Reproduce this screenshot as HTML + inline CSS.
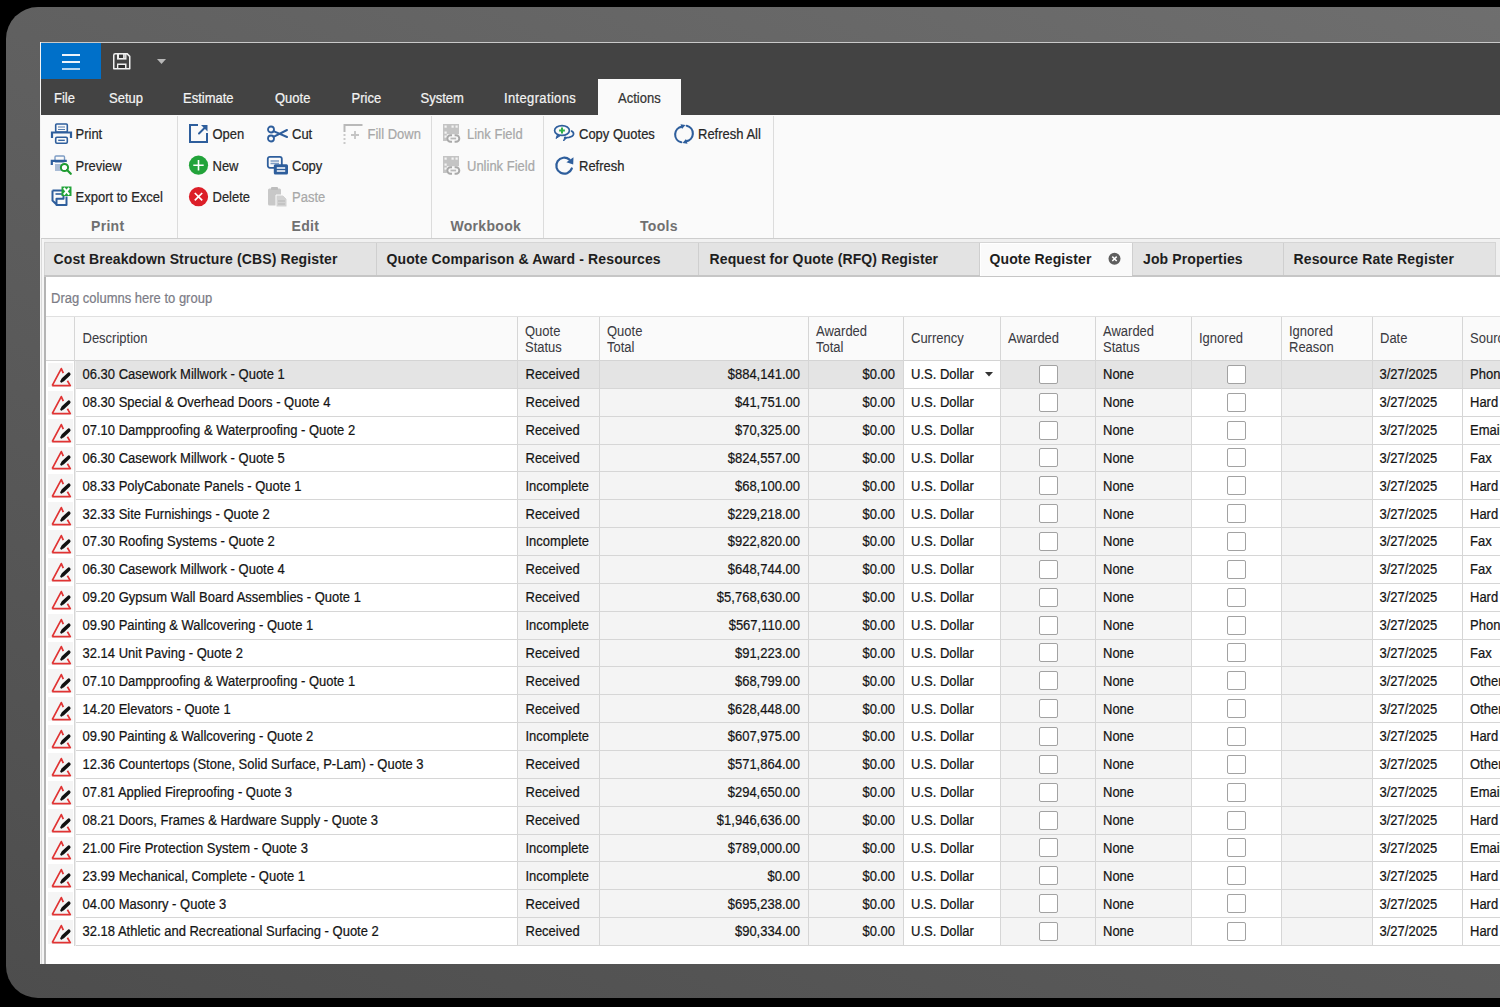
<!DOCTYPE html>
<html><head><meta charset="utf-8">
<style>
*{box-sizing:border-box}
html,body{margin:0;padding:0}
body{width:1500px;height:1007px;overflow:hidden;position:relative;background:#000;font-family:"Liberation Sans",sans-serif;font-size:13px;color:#141414}
.a{position:absolute}
.t{position:absolute;white-space:nowrap;line-height:16px;transform:scaleY(1.12);transform-origin:0 12.5px;-webkit-text-stroke-width:0.2px}
.b{transform:none}
svg{position:absolute;overflow:visible}
</style></head><body>

<div class="a" style="left:6px;top:7px;width:1560px;height:991px;border-radius:32px;background:linear-gradient(25.6deg,#4d4d4d,#6f6f6f)"></div>
<div class="a" style="left:40px;top:42px;width:1460px;height:922px;background:#f0f0f0"></div>
<div class="a" style="left:40px;top:42px;width:1460px;height:1px;background:#c9c9c9"></div>
<div class="a" style="left:40px;top:42px;width:1px;height:922px;background:#f4f4f4"></div>
<div class="a" style="left:41px;top:43px;width:1459px;height:72px;background:#434343"></div>
<div class="a" style="left:41px;top:43px;width:60px;height:36px;background:#0070c9"></div>
<div class="a" style="left:62px;top:54px;width:18px;height:2px;background:#eef4fb"></div>
<div class="a" style="left:62px;top:61px;width:18px;height:2px;background:#eef4fb"></div>
<div class="a" style="left:62px;top:68px;width:18px;height:2px;background:#b5d5f0"></div>
<svg style="left:112px;top:52px" width="20" height="20" viewBox="0 0 20 20"><path d="M1.75 3.2Q1.75 1.65 3.3 1.65H15L17.75 4.4V16.65H1.75Z" fill="none" stroke="#f0f0f0" stroke-width="1.5" stroke-linejoin="round"/><path d="M5 1.65H14.5V7.6H5Z" fill="#f0f0f0"/><rect x="7" y="2.6" width="4" height="3.4" fill="#383838"/><rect x="11.5" y="2.6" width="2" height="3.4" fill="#c8c8c8"/><path d="M5.75 16.65V12.25H13.75V16.65" fill="none" stroke="#f0f0f0" stroke-width="1.5"/><rect x="6.6" y="13" width="6.3" height="3" fill="#2e2e2e"/></svg>
<svg style="left:157px;top:59px" width="9" height="5" viewBox="0 0 9 5"><path d="M0 0h9l-4.5 5z" fill="#b8b8b8"/></svg>
<div class="t" style="left:54px;top:90.5px;color:#f3f3f3">File</div>
<div class="t" style="left:109px;top:90.5px;color:#f3f3f3">Setup</div>
<div class="t" style="left:183px;top:90.5px;color:#f3f3f3">Estimate</div>
<div class="t" style="left:275px;top:90.5px;color:#f3f3f3">Quote</div>
<div class="t" style="left:351.5px;top:90.5px;color:#f3f3f3">Price</div>
<div class="t" style="left:420.5px;top:90.5px;color:#f3f3f3">System</div>
<div class="t" style="left:504px;top:90.5px;color:#f3f3f3;letter-spacing:0.35px">Integrations</div>
<div class="a" style="left:598px;top:79px;width:83px;height:37px;background:#fafafa"></div>
<div class="t" style="left:618px;top:90.5px;color:#333">Actions</div>
<div class="a" style="left:41px;top:115px;width:1459px;height:123px;background:#fafafa"></div>
<div class="a" style="left:41px;top:238px;width:1459px;height:1px;background:#cdcdcd"></div>
<div class="a" style="left:177px;top:116px;width:1px;height:122px;background:#dcdcdc"></div>
<div class="a" style="left:431px;top:116px;width:1px;height:122px;background:#dcdcdc"></div>
<div class="a" style="left:543px;top:116px;width:1px;height:122px;background:#dcdcdc"></div>
<div class="a" style="left:773px;top:116px;width:1px;height:122px;background:#dcdcdc"></div>
<div class="t" style="left:75.5px;top:126.5px;color:#262626">Print</div>
<div class="t" style="left:75.5px;top:158.5px;color:#262626">Preview</div>
<div class="t" style="left:75.5px;top:189.5px;color:#262626">Export to Excel</div>
<div class="t" style="left:212.5px;top:126.5px;color:#262626">Open</div>
<div class="t" style="left:212.5px;top:158.5px;color:#262626">New</div>
<div class="t" style="left:212.5px;top:189.5px;color:#262626">Delete</div>
<div class="t" style="left:292px;top:126.5px;color:#262626">Cut</div>
<div class="t" style="left:292px;top:158.5px;color:#262626">Copy</div>
<div class="t" style="left:292px;top:189.5px;color:#a8a8a8">Paste</div>
<div class="t" style="left:367.5px;top:126.5px;color:#a8a8a8">Fill Down</div>
<div class="t" style="left:467px;top:126.5px;color:#a8a8a8">Link Field</div>
<div class="t" style="left:467px;top:158.5px;color:#a8a8a8">Unlink Field</div>
<div class="t" style="left:579px;top:126.5px;color:#262626">Copy Quotes</div>
<div class="t" style="left:698px;top:126.5px;color:#262626">Refresh All</div>
<div class="t" style="left:579px;top:158.5px;color:#262626">Refresh</div>
<div class="t" style="left:91px;top:218px;font-size:14px;font-weight:bold;color:#707070;transform:none;-webkit-text-stroke-width:0;letter-spacing:0.3px">Print</div>
<div class="t" style="left:291.5px;top:218px;font-size:14px;font-weight:bold;color:#707070;transform:none;-webkit-text-stroke-width:0;letter-spacing:0.3px">Edit</div>
<div class="t" style="left:450.5px;top:218px;font-size:14px;font-weight:bold;color:#707070;transform:none;-webkit-text-stroke-width:0;letter-spacing:0.3px">Workbook</div>
<div class="t" style="left:640px;top:218px;font-size:14px;font-weight:bold;color:#707070;transform:none;-webkit-text-stroke-width:0;letter-spacing:0.3px">Tools</div>
<svg style="left:51px;top:123px" width="21" height="21" viewBox="0 0 21 21">
<rect x="4.7" y="1" width="11.6" height="8" rx="1" fill="none" stroke="#2e5e9c" stroke-width="1.6"/>
<path d="M7 4h7M7 6.5h7" stroke="#2e5e9c" stroke-width="1.2" opacity=".8"/>
<path d="M1 15V9.5h19V15" fill="none" stroke="#2e5e9c" stroke-width="2.2"/>
<rect x="4.7" y="14.3" width="11.6" height="6" rx="1.2" fill="none" stroke="#2e5e9c" stroke-width="1.6"/>
<path d="M7.2 17.3h6.6" stroke="#2e5e9c" stroke-width="1.3"/>
</svg>
<svg style="left:51px;top:155px" width="22" height="22" viewBox="0 0 22 22">
<rect x="4" y="1" width="9.5" height="6" rx="1" fill="none" stroke="#7d9cc4" stroke-width="1.4"/>
<path d="M0.8 10V5.8h15" fill="none" stroke="#2e5e9c" stroke-width="2.2"/>
<rect x="4" y="9" width="8" height="7" fill="#a9bcd6"/>
<circle cx="13.5" cy="12.5" r="3.6" fill="#fff" stroke="#1e9b30" stroke-width="2"/>
<path d="M16 15l3.8 3.8" stroke="#1e9b30" stroke-width="2.2" stroke-linecap="round"/>
</svg>
<svg style="left:51px;top:186px" width="22" height="22" viewBox="0 0 22 22">
<path d="M1.5 4.5h11v8.2h-7v6.3h10V10.5M1.5 4.5v10l4 4" fill="none" stroke="#2e5e9c" stroke-width="2" stroke-linejoin="round"/>
<path d="M4.5 8h8" stroke="#2e5e9c" stroke-width="1.6"/>
<rect x="10.5" y="0.5" width="10" height="9.5" fill="#22a33a"/>
<path d="M12.8 2l5.4 6.6M18.2 2l-5.4 6.6" stroke="#fff" stroke-width="2"/>
</svg>
<svg style="left:188px;top:123px" width="21" height="21" viewBox="0 0 21 21">
<path d="M10 2H2v17h17v-9" fill="none" stroke="#2e5e9c" stroke-width="2"/>
<path d="M11 10.5l7-7" stroke="#2e5e9c" stroke-width="2" stroke-linecap="round"/>
<path d="M13 2h6.5v6.5z" fill="#2e5e9c"/>
</svg>
<svg style="left:188px;top:155px" width="21" height="21" viewBox="0 0 21 21">
<circle cx="10.5" cy="10.2" r="9.6" fill="#22a33a"/>
<path d="M10.5 5v10.4M5.3 10.2h10.4" stroke="#fff" stroke-width="1.6"/>
</svg>
<svg style="left:188px;top:186px" width="21" height="21" viewBox="0 0 21 21">
<circle cx="10.5" cy="10.7" r="9.6" fill="#dc1e28"/>
<path d="M6.8 7l7.4 7.4M14.2 7l-7.4 7.4" stroke="#fff" stroke-width="1.7"/>
</svg>
<svg style="left:266px;top:123px" width="22" height="21" viewBox="0 0 22 21">
<circle cx="5" cy="6.5" r="3" fill="none" stroke="#2e5e9c" stroke-width="1.8"/>
<circle cx="5" cy="15.5" r="3" fill="none" stroke="#2e5e9c" stroke-width="1.8"/>
<path d="M7.5 8.2L21 14M7.5 13.8L21 7" stroke="#2e5e9c" stroke-width="2" stroke-linecap="round"/>
</svg>
<svg style="left:266px;top:155px" width="23" height="21" viewBox="0 0 23 21">
<rect x="1.8" y="1.8" width="14" height="11" rx="2" fill="#fafafa" stroke="#2e5e9c" stroke-width="1.8"/>
<path d="M4.5 6h8.5M4.5 8.5h8.5" stroke="#7d9cc4" stroke-width="1.6"/>
<rect x="7.8" y="9.3" width="14.2" height="10.2" rx="1.5" fill="#2e5e9c"/>
<path d="M10.8 13h8.4M10.8 16h8.4" stroke="#fff" stroke-width="1.3"/>
</svg>
<svg style="left:266px;top:186px" width="23" height="22" viewBox="0 0 23 22">
<rect x="2" y="2.5" width="13" height="17" rx="1.5" fill="#c8c8c8"/>
<rect x="5" y="1" width="7" height="3" rx="1" fill="#bdbdbd"/>
<path d="M10 9h7l4 4v8H10z" fill="#d2d2d2" stroke="#fafafa" stroke-width="1"/>
<path d="M12 15h7M12 18h7" stroke="#b5b5b5" stroke-width="1.2"/>
</svg>
<svg style="left:343px;top:123px" width="21" height="22" viewBox="0 0 21 22">
<path d="M1.5 9V2h18" fill="none" stroke="#b9b9b9" stroke-width="2"/>
<path d="M1.5 11.2v1.6M1.5 15.2v1.6M1.5 19.2v1.6" stroke="#b9b9b9" stroke-width="2"/>
<path d="M12 8v8M8 12h8" stroke="#c4c4c4" stroke-width="1.8"/>
</svg>
<svg style="left:442px;top:123px" width="22" height="22" viewBox="0 0 22 22">
<rect x="1" y="1" width="16" height="17" fill="#c4c4c4"/>
<g fill="#f4f4f4"><rect x="2.5" y="2.5" width="2.2" height="2.2"/><rect x="9.5" y="2.5" width="2.2" height="2.2"/><rect x="13.5" y="2.5" width="2.2" height="2.2"/>
<rect x="2.5" y="8.5" width="2.2" height="2.2"/><rect x="2.5" y="12.5" width="2.2" height="2.2"/></g>
<path d="M4.8 11.2h13v9h-13z" fill="#f8f8f8"/>
<path d="M10 12.2H8.6a3.3 3.3 0 0 0 0 6.6H10M12.6 12.2H14a3.3 3.3 0 0 1 0 6.6H12.6" fill="none" stroke="#a9a9a9" stroke-width="2"/>
<path d="M8.5 15.5h5.6" stroke="#b8b8b8" stroke-width="1.8"/>
</svg>
<svg style="left:442px;top:155px" width="22" height="22" viewBox="0 0 22 22">
<rect x="1" y="1" width="16" height="17" fill="#c4c4c4"/>
<g fill="#f4f4f4"><rect x="2.5" y="2.5" width="2.2" height="2.2"/><rect x="9.5" y="2.5" width="2.2" height="2.2"/><rect x="13.5" y="2.5" width="2.2" height="2.2"/>
<rect x="2.5" y="8.5" width="2.2" height="2.2"/><rect x="2.5" y="12.5" width="2.2" height="2.2"/></g>
<path d="M4.8 11.2h13v9h-13z" fill="#f8f8f8"/>
<path d="M10 12.2H8.6a3.3 3.3 0 0 0 0 6.6H10M12.6 12.2H14a3.3 3.3 0 0 1 0 6.6H12.6" fill="none" stroke="#a9a9a9" stroke-width="2"/>
<path d="M8.5 15.5h5.6" stroke="#b8b8b8" stroke-width="1.8"/>
</svg>
<svg style="left:553px;top:123px" width="24" height="22" viewBox="0 0 24 22">
<ellipse cx="9" cy="7.5" rx="7.4" ry="4.9" fill="none" stroke="#2e5e9c" stroke-width="1.7"/>
<path d="M4.5 11.5l-1.5 4 4.5-3" fill="#2e5e9c" stroke="#2e5e9c" stroke-width="1"/>
<path d="M18 7.8c3.5 1.6 4 5.3-2 6.6l-5 .6" fill="none" stroke="#2e5e9c" stroke-width="1.7"/>
<path d="M12 13.5l-1.5 4.5 3.5-3.5" fill="#2e5e9c" stroke="#2e5e9c" stroke-width="1"/>
<path d="M9 4.6v5.8M6.1 7.5h5.8" stroke="#2fb04a" stroke-width="2"/>
</svg>
<svg style="left:673px;top:123px" width="22" height="22" viewBox="0 0 22 22">
<path d="M8.3 19.3A8 8 0 0 1 9 3.6" fill="none" stroke="#2e5e9c" stroke-width="2.1" stroke-linecap="round"/>
<path d="M7.5 1.2l5 0.8-3.5 4z" fill="#2e5e9c"/>
<path d="M13.7 2.7A8 8 0 0 1 13 18.4" fill="none" stroke="#2e5e9c" stroke-width="2.1" stroke-linecap="round"/>
<path d="M14.5 20.8l-5-0.8 3.5-4z" fill="#2e5e9c"/>
</svg>
<svg style="left:554px;top:155px" width="22" height="22" viewBox="0 0 22 22">
<path d="M17.8 13.5A8 8 0 1 1 15.5 4.6" fill="none" stroke="#2e5e9c" stroke-width="2.2" stroke-linecap="round"/>
<path d="M19.5 2.2l-0.3 7.3-6.8-2.2z" fill="#2e5e9c"/>
</svg>
<div class="a" style="left:41px;top:239px;width:1459px;height:725px;background:#f0f0f0"></div>
<div class="a" style="left:41px;top:239px;width:1px;height:725px;background:#dadada"></div>
<div class="a" style="left:42px;top:239px;width:2px;height:725px;background:#f6f6f6"></div>
<div class="a" style="left:44px;top:242px;width:1452px;height:34px;background:#e3e3e3;border:1px solid #d5d5d5;border-bottom:none"></div>
<div class="a" style="left:44px;top:275px;width:1456px;height:2px;background:#c6c6c6"></div>
<div class="a" style="left:376px;top:243px;width:1px;height:32px;background:#cfcfcf"></div>
<div class="a" style="left:698px;top:243px;width:1px;height:32px;background:#cfcfcf"></div>
<div class="a" style="left:979px;top:243px;width:1px;height:32px;background:#cfcfcf"></div>
<div class="a" style="left:1132px;top:243px;width:1px;height:32px;background:#cfcfcf"></div>
<div class="a" style="left:1283px;top:243px;width:1px;height:32px;background:#cfcfcf"></div>
<div class="a" style="left:980px;top:243px;width:152px;height:33px;background:#fafafa;border-left:1px solid #fff;border-top:1px solid #fff"></div>
<div class="t" style="left:53.5px;top:251px;font-size:14px;font-weight:bold;color:#1e1e1e;transform:none;-webkit-text-stroke-width:0;letter-spacing:0.12px">Cost Breakdown Structure (CBS) Register</div>
<div class="t" style="left:386.5px;top:251px;font-size:14px;font-weight:bold;color:#1e1e1e;transform:none;-webkit-text-stroke-width:0;letter-spacing:0.12px">Quote Comparison &amp; Award - Resources</div>
<div class="t" style="left:709.5px;top:251px;font-size:14px;font-weight:bold;color:#1e1e1e;transform:none;-webkit-text-stroke-width:0;letter-spacing:0.12px">Request for Quote (RFQ) Register</div>
<div class="t" style="left:989.5px;top:251px;font-size:14px;font-weight:bold;color:#1e1e1e;transform:none;-webkit-text-stroke-width:0;letter-spacing:0.12px">Quote Register</div>
<div class="t" style="left:1143px;top:251px;font-size:14px;font-weight:bold;color:#1e1e1e;transform:none;-webkit-text-stroke-width:0;letter-spacing:0.12px">Job Properties</div>
<div class="t" style="left:1293.5px;top:251px;font-size:14px;font-weight:bold;color:#1e1e1e;transform:none;-webkit-text-stroke-width:0;letter-spacing:0.12px">Resource Rate Register</div>
<svg style="left:1108px;top:252px" width="14" height="14" viewBox="0 0 14 14"><circle cx="6.5" cy="6.8" r="6" fill="#5e5e5e"/><path d="M4.3 4.6l4.4 4.4M8.7 4.6l-4.4 4.4" stroke="#fff" stroke-width="1.5"/></svg>
<div class="a" style="left:44px;top:277px;width:1456px;height:687px;background:#fff"></div>
<div class="a" style="left:44px;top:277px;width:2px;height:687px;background:#b4b4b4"></div>
<div class="t" style="left:51px;top:290.5px;color:#7c7c86">Drag columns here to group</div>
<div class="a" style="left:46px;top:316px;width:1454px;height:44px;background:#fafafa;border-top:1px solid #e0e0e0"></div>
<div class="a" style="left:46px;top:360px;width:1454px;height:1px;background:#d4d4d4"></div>
<div class="t" style="left:82.5px;top:330.5px;color:#3a3a42;-webkit-text-stroke-width:0.05px">Description</div>
<div class="t" style="left:525px;top:325px;color:#3a3a42;-webkit-text-stroke-width:0.05px;line-height:14px;transform-origin:0 11.5px">Quote<br>Status</div>
<div class="t" style="left:607px;top:325px;color:#3a3a42;-webkit-text-stroke-width:0.05px;line-height:14px;transform-origin:0 11.5px">Quote<br>Total</div>
<div class="t" style="left:816px;top:325px;color:#3a3a42;-webkit-text-stroke-width:0.05px;line-height:14px;transform-origin:0 11.5px">Awarded<br>Total</div>
<div class="t" style="left:911px;top:330.5px;color:#3a3a42;-webkit-text-stroke-width:0.05px">Currency</div>
<div class="t" style="left:1008px;top:330.5px;color:#3a3a42;-webkit-text-stroke-width:0.05px">Awarded</div>
<div class="t" style="left:1103px;top:325px;color:#3a3a42;-webkit-text-stroke-width:0.05px;line-height:14px;transform-origin:0 11.5px">Awarded<br>Status</div>
<div class="t" style="left:1199px;top:330.5px;color:#3a3a42;-webkit-text-stroke-width:0.05px">Ignored</div>
<div class="t" style="left:1289px;top:325px;color:#3a3a42;-webkit-text-stroke-width:0.05px;line-height:14px;transform-origin:0 11.5px">Ignored<br>Reason</div>
<div class="t" style="left:1380px;top:330.5px;color:#3a3a42;-webkit-text-stroke-width:0.05px">Date</div>
<div class="t" style="left:1470px;top:330.5px;color:#3a3a42;-webkit-text-stroke-width:0.05px">Source</div>
<div class="a" style="left:48px;top:363px;width:25px;height:24px;background:#f5f5f5"></div>
<div class="a" style="left:48px;top:391px;width:25px;height:24px;background:#f5f5f5"></div>
<div class="a" style="left:48px;top:419px;width:25px;height:24px;background:#f5f5f5"></div>
<div class="a" style="left:48px;top:447px;width:25px;height:23px;background:#f5f5f5"></div>
<div class="a" style="left:48px;top:474px;width:25px;height:24px;background:#f5f5f5"></div>
<div class="a" style="left:48px;top:502px;width:25px;height:24px;background:#f5f5f5"></div>
<div class="a" style="left:48px;top:530px;width:25px;height:24px;background:#f5f5f5"></div>
<div class="a" style="left:48px;top:558px;width:25px;height:24px;background:#f5f5f5"></div>
<div class="a" style="left:48px;top:586px;width:25px;height:24px;background:#f5f5f5"></div>
<div class="a" style="left:48px;top:614px;width:25px;height:24px;background:#f5f5f5"></div>
<div class="a" style="left:48px;top:642px;width:25px;height:23px;background:#f5f5f5"></div>
<div class="a" style="left:48px;top:669px;width:25px;height:24px;background:#f5f5f5"></div>
<div class="a" style="left:48px;top:697px;width:25px;height:24px;background:#f5f5f5"></div>
<div class="a" style="left:48px;top:725px;width:25px;height:24px;background:#f5f5f5"></div>
<div class="a" style="left:48px;top:753px;width:25px;height:24px;background:#f5f5f5"></div>
<div class="a" style="left:48px;top:781px;width:25px;height:24px;background:#f5f5f5"></div>
<div class="a" style="left:48px;top:809px;width:25px;height:24px;background:#f5f5f5"></div>
<div class="a" style="left:48px;top:837px;width:25px;height:23px;background:#f5f5f5"></div>
<div class="a" style="left:48px;top:864px;width:25px;height:24px;background:#f5f5f5"></div>
<div class="a" style="left:48px;top:892px;width:25px;height:24px;background:#f5f5f5"></div>
<div class="a" style="left:48px;top:920px;width:25px;height:24px;background:#f5f5f5"></div>
<div class="a" style="left:518px;top:361px;width:81px;height:584px;background:#f4f4f4"></div>
<div class="a" style="left:600px;top:361px;width:208px;height:584px;background:#f4f4f4"></div>
<div class="a" style="left:809px;top:361px;width:94px;height:584px;background:#f4f4f4"></div>
<div class="a" style="left:1001px;top:361px;width:94px;height:584px;background:#f4f4f4"></div>
<div class="a" style="left:1096px;top:361px;width:95px;height:584px;background:#f4f4f4"></div>
<div class="a" style="left:1282px;top:361px;width:90px;height:584px;background:#f4f4f4"></div>
<div class="a" style="left:75px;top:361px;width:1425px;height:27px;background:#e4e4e4"></div>
<div class="a" style="left:904px;top:361px;width:96px;height:27px;background:#fff"></div>
<div class="a" style="left:75px;top:388px;width:1425px;height:1px;background:#d6d6d6"></div>
<div class="a" style="left:75px;top:416px;width:1425px;height:1px;background:#d6d6d6"></div>
<div class="a" style="left:75px;top:444px;width:1425px;height:1px;background:#d6d6d6"></div>
<div class="a" style="left:75px;top:471px;width:1425px;height:1px;background:#d6d6d6"></div>
<div class="a" style="left:75px;top:499px;width:1425px;height:1px;background:#d6d6d6"></div>
<div class="a" style="left:75px;top:527px;width:1425px;height:1px;background:#d6d6d6"></div>
<div class="a" style="left:75px;top:555px;width:1425px;height:1px;background:#d6d6d6"></div>
<div class="a" style="left:75px;top:583px;width:1425px;height:1px;background:#d6d6d6"></div>
<div class="a" style="left:75px;top:611px;width:1425px;height:1px;background:#d6d6d6"></div>
<div class="a" style="left:75px;top:639px;width:1425px;height:1px;background:#d6d6d6"></div>
<div class="a" style="left:75px;top:666px;width:1425px;height:1px;background:#d6d6d6"></div>
<div class="a" style="left:75px;top:694px;width:1425px;height:1px;background:#d6d6d6"></div>
<div class="a" style="left:75px;top:722px;width:1425px;height:1px;background:#d6d6d6"></div>
<div class="a" style="left:75px;top:750px;width:1425px;height:1px;background:#d6d6d6"></div>
<div class="a" style="left:75px;top:778px;width:1425px;height:1px;background:#d6d6d6"></div>
<div class="a" style="left:75px;top:806px;width:1425px;height:1px;background:#d6d6d6"></div>
<div class="a" style="left:75px;top:834px;width:1425px;height:1px;background:#d6d6d6"></div>
<div class="a" style="left:75px;top:861px;width:1425px;height:1px;background:#d6d6d6"></div>
<div class="a" style="left:75px;top:889px;width:1425px;height:1px;background:#d6d6d6"></div>
<div class="a" style="left:75px;top:917px;width:1425px;height:1px;background:#d6d6d6"></div>
<div class="a" style="left:75px;top:945px;width:1425px;height:1px;background:#d6d6d6"></div>
<div class="a" style="left:74px;top:317px;width:1px;height:629px;background:#d6d6d6"></div>
<div class="a" style="left:75px;top:361px;width:1px;height:585px;background:#ececec"></div>
<div class="a" style="left:517px;top:317px;width:1px;height:629px;background:#d6d6d6"></div>
<div class="a" style="left:599px;top:317px;width:1px;height:629px;background:#d6d6d6"></div>
<div class="a" style="left:808px;top:317px;width:1px;height:629px;background:#d6d6d6"></div>
<div class="a" style="left:903px;top:317px;width:1px;height:629px;background:#d6d6d6"></div>
<div class="a" style="left:1000px;top:317px;width:1px;height:629px;background:#d6d6d6"></div>
<div class="a" style="left:1095px;top:317px;width:1px;height:629px;background:#d6d6d6"></div>
<div class="a" style="left:1191px;top:317px;width:1px;height:629px;background:#d6d6d6"></div>
<div class="a" style="left:1281px;top:317px;width:1px;height:629px;background:#d6d6d6"></div>
<div class="a" style="left:1372px;top:317px;width:1px;height:629px;background:#d6d6d6"></div>
<div class="a" style="left:1462px;top:317px;width:1px;height:629px;background:#d6d6d6"></div>
<svg style="left:51px;top:367px" width="21" height="20" viewBox="0 0 21 20"><path d="M1.2 18.6L10.3 1.6L12.3 6.2M16.4 13.7L19.3 18.6H1.2" fill="none" stroke="#e03333" stroke-width="1.7" stroke-linejoin="round"/><path d="M12 12.6L17.8 7.2" stroke="#111" stroke-width="3.5" stroke-linecap="round"/><path d="M10.4 14.4L12.6 12" stroke="#111" stroke-width="2.4" stroke-linecap="round"/></svg>
<div class="t" style="left:82.5px;top:367.26px">06.30 Casework Millwork - Quote 1</div>
<div class="t" style="left:525.5px;top:367.26px">Received</div>
<div class="t" style="left:600px;width:200px;text-align:right;top:367.26px">$884,141.00</div>
<div class="t" style="left:809px;width:86px;text-align:right;top:367.26px">$0.00</div>
<div class="t" style="left:911px;top:367.26px">U.S. Dollar</div>
<div class="a" style="left:1039px;top:365px;width:19px;height:19px;border:1px solid #a2a2a2;border-radius:2px;background:#fff"></div>
<div class="t" style="left:1103px;top:367.26px">None</div>
<div class="a" style="left:1227px;top:365px;width:19px;height:19px;border:1px solid #a2a2a2;border-radius:2px;background:#fff"></div>
<div class="t" style="left:1379.5px;top:367.26px">3/27/2025</div>
<div class="t" style="left:1470px;top:367.26px">Phone</div>
<svg style="left:51px;top:395px" width="21" height="20" viewBox="0 0 21 20"><path d="M1.2 18.6L10.3 1.6L12.3 6.2M16.4 13.7L19.3 18.6H1.2" fill="none" stroke="#e03333" stroke-width="1.7" stroke-linejoin="round"/><path d="M12 12.6L17.8 7.2" stroke="#111" stroke-width="3.5" stroke-linecap="round"/><path d="M10.4 14.4L12.6 12" stroke="#111" stroke-width="2.4" stroke-linecap="round"/></svg>
<div class="t" style="left:82.5px;top:395.11px">08.30 Special &amp; Overhead Doors - Quote 4</div>
<div class="t" style="left:525.5px;top:395.11px">Received</div>
<div class="t" style="left:600px;width:200px;text-align:right;top:395.11px">$41,751.00</div>
<div class="t" style="left:809px;width:86px;text-align:right;top:395.11px">$0.00</div>
<div class="t" style="left:911px;top:395.11px">U.S. Dollar</div>
<div class="a" style="left:1039px;top:393px;width:19px;height:19px;border:1px solid #a2a2a2;border-radius:2px;background:#fff"></div>
<div class="t" style="left:1103px;top:395.11px">None</div>
<div class="a" style="left:1227px;top:393px;width:19px;height:19px;border:1px solid #a2a2a2;border-radius:2px;background:#fff"></div>
<div class="t" style="left:1379.5px;top:395.11px">3/27/2025</div>
<div class="t" style="left:1470px;top:395.11px">Hard</div>
<svg style="left:51px;top:423px" width="21" height="20" viewBox="0 0 21 20"><path d="M1.2 18.6L10.3 1.6L12.3 6.2M16.4 13.7L19.3 18.6H1.2" fill="none" stroke="#e03333" stroke-width="1.7" stroke-linejoin="round"/><path d="M12 12.6L17.8 7.2" stroke="#111" stroke-width="3.5" stroke-linecap="round"/><path d="M10.4 14.4L12.6 12" stroke="#111" stroke-width="2.4" stroke-linecap="round"/></svg>
<div class="t" style="left:82.5px;top:422.97px">07.10 Dampproofing &amp; Waterproofing - Quote 2</div>
<div class="t" style="left:525.5px;top:422.97px">Received</div>
<div class="t" style="left:600px;width:200px;text-align:right;top:422.97px">$70,325.00</div>
<div class="t" style="left:809px;width:86px;text-align:right;top:422.97px">$0.00</div>
<div class="t" style="left:911px;top:422.97px">U.S. Dollar</div>
<div class="a" style="left:1039px;top:421px;width:19px;height:19px;border:1px solid #a2a2a2;border-radius:2px;background:#fff"></div>
<div class="t" style="left:1103px;top:422.97px">None</div>
<div class="a" style="left:1227px;top:421px;width:19px;height:19px;border:1px solid #a2a2a2;border-radius:2px;background:#fff"></div>
<div class="t" style="left:1379.5px;top:422.97px">3/27/2025</div>
<div class="t" style="left:1470px;top:422.97px">Email</div>
<svg style="left:51px;top:450px" width="21" height="20" viewBox="0 0 21 20"><path d="M1.2 18.6L10.3 1.6L12.3 6.2M16.4 13.7L19.3 18.6H1.2" fill="none" stroke="#e03333" stroke-width="1.7" stroke-linejoin="round"/><path d="M12 12.6L17.8 7.2" stroke="#111" stroke-width="3.5" stroke-linecap="round"/><path d="M10.4 14.4L12.6 12" stroke="#111" stroke-width="2.4" stroke-linecap="round"/></svg>
<div class="t" style="left:82.5px;top:450.83px">06.30 Casework Millwork - Quote 5</div>
<div class="t" style="left:525.5px;top:450.83px">Received</div>
<div class="t" style="left:600px;width:200px;text-align:right;top:450.83px">$824,557.00</div>
<div class="t" style="left:809px;width:86px;text-align:right;top:450.83px">$0.00</div>
<div class="t" style="left:911px;top:450.83px">U.S. Dollar</div>
<div class="a" style="left:1039px;top:448px;width:19px;height:19px;border:1px solid #a2a2a2;border-radius:2px;background:#fff"></div>
<div class="t" style="left:1103px;top:450.83px">None</div>
<div class="a" style="left:1227px;top:448px;width:19px;height:19px;border:1px solid #a2a2a2;border-radius:2px;background:#fff"></div>
<div class="t" style="left:1379.5px;top:450.83px">3/27/2025</div>
<div class="t" style="left:1470px;top:450.83px">Fax</div>
<svg style="left:51px;top:478px" width="21" height="20" viewBox="0 0 21 20"><path d="M1.2 18.6L10.3 1.6L12.3 6.2M16.4 13.7L19.3 18.6H1.2" fill="none" stroke="#e03333" stroke-width="1.7" stroke-linejoin="round"/><path d="M12 12.6L17.8 7.2" stroke="#111" stroke-width="3.5" stroke-linecap="round"/><path d="M10.4 14.4L12.6 12" stroke="#111" stroke-width="2.4" stroke-linecap="round"/></svg>
<div class="t" style="left:82.5px;top:478.69px">08.33 PolyCabonate Panels - Quote 1</div>
<div class="t" style="left:525.5px;top:478.69px">Incomplete</div>
<div class="t" style="left:600px;width:200px;text-align:right;top:478.69px">$68,100.00</div>
<div class="t" style="left:809px;width:86px;text-align:right;top:478.69px">$0.00</div>
<div class="t" style="left:911px;top:478.69px">U.S. Dollar</div>
<div class="a" style="left:1039px;top:476px;width:19px;height:19px;border:1px solid #a2a2a2;border-radius:2px;background:#fff"></div>
<div class="t" style="left:1103px;top:478.69px">None</div>
<div class="a" style="left:1227px;top:476px;width:19px;height:19px;border:1px solid #a2a2a2;border-radius:2px;background:#fff"></div>
<div class="t" style="left:1379.5px;top:478.69px">3/27/2025</div>
<div class="t" style="left:1470px;top:478.69px">Hard</div>
<svg style="left:51px;top:506px" width="21" height="20" viewBox="0 0 21 20"><path d="M1.2 18.6L10.3 1.6L12.3 6.2M16.4 13.7L19.3 18.6H1.2" fill="none" stroke="#e03333" stroke-width="1.7" stroke-linejoin="round"/><path d="M12 12.6L17.8 7.2" stroke="#111" stroke-width="3.5" stroke-linecap="round"/><path d="M10.4 14.4L12.6 12" stroke="#111" stroke-width="2.4" stroke-linecap="round"/></svg>
<div class="t" style="left:82.5px;top:506.54px">32.33 Site Furnishings - Quote 2</div>
<div class="t" style="left:525.5px;top:506.54px">Received</div>
<div class="t" style="left:600px;width:200px;text-align:right;top:506.54px">$229,218.00</div>
<div class="t" style="left:809px;width:86px;text-align:right;top:506.54px">$0.00</div>
<div class="t" style="left:911px;top:506.54px">U.S. Dollar</div>
<div class="a" style="left:1039px;top:504px;width:19px;height:19px;border:1px solid #a2a2a2;border-radius:2px;background:#fff"></div>
<div class="t" style="left:1103px;top:506.54px">None</div>
<div class="a" style="left:1227px;top:504px;width:19px;height:19px;border:1px solid #a2a2a2;border-radius:2px;background:#fff"></div>
<div class="t" style="left:1379.5px;top:506.54px">3/27/2025</div>
<div class="t" style="left:1470px;top:506.54px">Hard</div>
<svg style="left:51px;top:534px" width="21" height="20" viewBox="0 0 21 20"><path d="M1.2 18.6L10.3 1.6L12.3 6.2M16.4 13.7L19.3 18.6H1.2" fill="none" stroke="#e03333" stroke-width="1.7" stroke-linejoin="round"/><path d="M12 12.6L17.8 7.2" stroke="#111" stroke-width="3.5" stroke-linecap="round"/><path d="M10.4 14.4L12.6 12" stroke="#111" stroke-width="2.4" stroke-linecap="round"/></svg>
<div class="t" style="left:82.5px;top:534.4px">07.30 Roofing Systems - Quote 2</div>
<div class="t" style="left:525.5px;top:534.4px">Incomplete</div>
<div class="t" style="left:600px;width:200px;text-align:right;top:534.4px">$922,820.00</div>
<div class="t" style="left:809px;width:86px;text-align:right;top:534.4px">$0.00</div>
<div class="t" style="left:911px;top:534.4px">U.S. Dollar</div>
<div class="a" style="left:1039px;top:532px;width:19px;height:19px;border:1px solid #a2a2a2;border-radius:2px;background:#fff"></div>
<div class="t" style="left:1103px;top:534.4px">None</div>
<div class="a" style="left:1227px;top:532px;width:19px;height:19px;border:1px solid #a2a2a2;border-radius:2px;background:#fff"></div>
<div class="t" style="left:1379.5px;top:534.4px">3/27/2025</div>
<div class="t" style="left:1470px;top:534.4px">Fax</div>
<svg style="left:51px;top:562px" width="21" height="20" viewBox="0 0 21 20"><path d="M1.2 18.6L10.3 1.6L12.3 6.2M16.4 13.7L19.3 18.6H1.2" fill="none" stroke="#e03333" stroke-width="1.7" stroke-linejoin="round"/><path d="M12 12.6L17.8 7.2" stroke="#111" stroke-width="3.5" stroke-linecap="round"/><path d="M10.4 14.4L12.6 12" stroke="#111" stroke-width="2.4" stroke-linecap="round"/></svg>
<div class="t" style="left:82.5px;top:562.26px">06.30 Casework Millwork - Quote 4</div>
<div class="t" style="left:525.5px;top:562.26px">Received</div>
<div class="t" style="left:600px;width:200px;text-align:right;top:562.26px">$648,744.00</div>
<div class="t" style="left:809px;width:86px;text-align:right;top:562.26px">$0.00</div>
<div class="t" style="left:911px;top:562.26px">U.S. Dollar</div>
<div class="a" style="left:1039px;top:560px;width:19px;height:19px;border:1px solid #a2a2a2;border-radius:2px;background:#fff"></div>
<div class="t" style="left:1103px;top:562.26px">None</div>
<div class="a" style="left:1227px;top:560px;width:19px;height:19px;border:1px solid #a2a2a2;border-radius:2px;background:#fff"></div>
<div class="t" style="left:1379.5px;top:562.26px">3/27/2025</div>
<div class="t" style="left:1470px;top:562.26px">Fax</div>
<svg style="left:51px;top:590px" width="21" height="20" viewBox="0 0 21 20"><path d="M1.2 18.6L10.3 1.6L12.3 6.2M16.4 13.7L19.3 18.6H1.2" fill="none" stroke="#e03333" stroke-width="1.7" stroke-linejoin="round"/><path d="M12 12.6L17.8 7.2" stroke="#111" stroke-width="3.5" stroke-linecap="round"/><path d="M10.4 14.4L12.6 12" stroke="#111" stroke-width="2.4" stroke-linecap="round"/></svg>
<div class="t" style="left:82.5px;top:590.11px">09.20 Gypsum Wall Board Assemblies - Quote 1</div>
<div class="t" style="left:525.5px;top:590.11px">Received</div>
<div class="t" style="left:600px;width:200px;text-align:right;top:590.11px">$5,768,630.00</div>
<div class="t" style="left:809px;width:86px;text-align:right;top:590.11px">$0.00</div>
<div class="t" style="left:911px;top:590.11px">U.S. Dollar</div>
<div class="a" style="left:1039px;top:588px;width:19px;height:19px;border:1px solid #a2a2a2;border-radius:2px;background:#fff"></div>
<div class="t" style="left:1103px;top:590.11px">None</div>
<div class="a" style="left:1227px;top:588px;width:19px;height:19px;border:1px solid #a2a2a2;border-radius:2px;background:#fff"></div>
<div class="t" style="left:1379.5px;top:590.11px">3/27/2025</div>
<div class="t" style="left:1470px;top:590.11px">Hard</div>
<svg style="left:51px;top:618px" width="21" height="20" viewBox="0 0 21 20"><path d="M1.2 18.6L10.3 1.6L12.3 6.2M16.4 13.7L19.3 18.6H1.2" fill="none" stroke="#e03333" stroke-width="1.7" stroke-linejoin="round"/><path d="M12 12.6L17.8 7.2" stroke="#111" stroke-width="3.5" stroke-linecap="round"/><path d="M10.4 14.4L12.6 12" stroke="#111" stroke-width="2.4" stroke-linecap="round"/></svg>
<div class="t" style="left:82.5px;top:617.97px">09.90 Painting &amp; Wallcovering - Quote 1</div>
<div class="t" style="left:525.5px;top:617.97px">Incomplete</div>
<div class="t" style="left:600px;width:200px;text-align:right;top:617.97px">$567,110.00</div>
<div class="t" style="left:809px;width:86px;text-align:right;top:617.97px">$0.00</div>
<div class="t" style="left:911px;top:617.97px">U.S. Dollar</div>
<div class="a" style="left:1039px;top:616px;width:19px;height:19px;border:1px solid #a2a2a2;border-radius:2px;background:#fff"></div>
<div class="t" style="left:1103px;top:617.97px">None</div>
<div class="a" style="left:1227px;top:616px;width:19px;height:19px;border:1px solid #a2a2a2;border-radius:2px;background:#fff"></div>
<div class="t" style="left:1379.5px;top:617.97px">3/27/2025</div>
<div class="t" style="left:1470px;top:617.97px">Phone</div>
<svg style="left:51px;top:645px" width="21" height="20" viewBox="0 0 21 20"><path d="M1.2 18.6L10.3 1.6L12.3 6.2M16.4 13.7L19.3 18.6H1.2" fill="none" stroke="#e03333" stroke-width="1.7" stroke-linejoin="round"/><path d="M12 12.6L17.8 7.2" stroke="#111" stroke-width="3.5" stroke-linecap="round"/><path d="M10.4 14.4L12.6 12" stroke="#111" stroke-width="2.4" stroke-linecap="round"/></svg>
<div class="t" style="left:82.5px;top:645.83px">32.14 Unit Paving - Quote 2</div>
<div class="t" style="left:525.5px;top:645.83px">Received</div>
<div class="t" style="left:600px;width:200px;text-align:right;top:645.83px">$91,223.00</div>
<div class="t" style="left:809px;width:86px;text-align:right;top:645.83px">$0.00</div>
<div class="t" style="left:911px;top:645.83px">U.S. Dollar</div>
<div class="a" style="left:1039px;top:643px;width:19px;height:19px;border:1px solid #a2a2a2;border-radius:2px;background:#fff"></div>
<div class="t" style="left:1103px;top:645.83px">None</div>
<div class="a" style="left:1227px;top:643px;width:19px;height:19px;border:1px solid #a2a2a2;border-radius:2px;background:#fff"></div>
<div class="t" style="left:1379.5px;top:645.83px">3/27/2025</div>
<div class="t" style="left:1470px;top:645.83px">Fax</div>
<svg style="left:51px;top:673px" width="21" height="20" viewBox="0 0 21 20"><path d="M1.2 18.6L10.3 1.6L12.3 6.2M16.4 13.7L19.3 18.6H1.2" fill="none" stroke="#e03333" stroke-width="1.7" stroke-linejoin="round"/><path d="M12 12.6L17.8 7.2" stroke="#111" stroke-width="3.5" stroke-linecap="round"/><path d="M10.4 14.4L12.6 12" stroke="#111" stroke-width="2.4" stroke-linecap="round"/></svg>
<div class="t" style="left:82.5px;top:673.69px">07.10 Dampproofing &amp; Waterproofing - Quote 1</div>
<div class="t" style="left:525.5px;top:673.69px">Received</div>
<div class="t" style="left:600px;width:200px;text-align:right;top:673.69px">$68,799.00</div>
<div class="t" style="left:809px;width:86px;text-align:right;top:673.69px">$0.00</div>
<div class="t" style="left:911px;top:673.69px">U.S. Dollar</div>
<div class="a" style="left:1039px;top:671px;width:19px;height:19px;border:1px solid #a2a2a2;border-radius:2px;background:#fff"></div>
<div class="t" style="left:1103px;top:673.69px">None</div>
<div class="a" style="left:1227px;top:671px;width:19px;height:19px;border:1px solid #a2a2a2;border-radius:2px;background:#fff"></div>
<div class="t" style="left:1379.5px;top:673.69px">3/27/2025</div>
<div class="t" style="left:1470px;top:673.69px">Other</div>
<svg style="left:51px;top:701px" width="21" height="20" viewBox="0 0 21 20"><path d="M1.2 18.6L10.3 1.6L12.3 6.2M16.4 13.7L19.3 18.6H1.2" fill="none" stroke="#e03333" stroke-width="1.7" stroke-linejoin="round"/><path d="M12 12.6L17.8 7.2" stroke="#111" stroke-width="3.5" stroke-linecap="round"/><path d="M10.4 14.4L12.6 12" stroke="#111" stroke-width="2.4" stroke-linecap="round"/></svg>
<div class="t" style="left:82.5px;top:701.54px">14.20 Elevators - Quote 1</div>
<div class="t" style="left:525.5px;top:701.54px">Received</div>
<div class="t" style="left:600px;width:200px;text-align:right;top:701.54px">$628,448.00</div>
<div class="t" style="left:809px;width:86px;text-align:right;top:701.54px">$0.00</div>
<div class="t" style="left:911px;top:701.54px">U.S. Dollar</div>
<div class="a" style="left:1039px;top:699px;width:19px;height:19px;border:1px solid #a2a2a2;border-radius:2px;background:#fff"></div>
<div class="t" style="left:1103px;top:701.54px">None</div>
<div class="a" style="left:1227px;top:699px;width:19px;height:19px;border:1px solid #a2a2a2;border-radius:2px;background:#fff"></div>
<div class="t" style="left:1379.5px;top:701.54px">3/27/2025</div>
<div class="t" style="left:1470px;top:701.54px">Other</div>
<svg style="left:51px;top:729px" width="21" height="20" viewBox="0 0 21 20"><path d="M1.2 18.6L10.3 1.6L12.3 6.2M16.4 13.7L19.3 18.6H1.2" fill="none" stroke="#e03333" stroke-width="1.7" stroke-linejoin="round"/><path d="M12 12.6L17.8 7.2" stroke="#111" stroke-width="3.5" stroke-linecap="round"/><path d="M10.4 14.4L12.6 12" stroke="#111" stroke-width="2.4" stroke-linecap="round"/></svg>
<div class="t" style="left:82.5px;top:729.4px">09.90 Painting &amp; Wallcovering - Quote 2</div>
<div class="t" style="left:525.5px;top:729.4px">Incomplete</div>
<div class="t" style="left:600px;width:200px;text-align:right;top:729.4px">$607,975.00</div>
<div class="t" style="left:809px;width:86px;text-align:right;top:729.4px">$0.00</div>
<div class="t" style="left:911px;top:729.4px">U.S. Dollar</div>
<div class="a" style="left:1039px;top:727px;width:19px;height:19px;border:1px solid #a2a2a2;border-radius:2px;background:#fff"></div>
<div class="t" style="left:1103px;top:729.4px">None</div>
<div class="a" style="left:1227px;top:727px;width:19px;height:19px;border:1px solid #a2a2a2;border-radius:2px;background:#fff"></div>
<div class="t" style="left:1379.5px;top:729.4px">3/27/2025</div>
<div class="t" style="left:1470px;top:729.4px">Hard</div>
<svg style="left:51px;top:757px" width="21" height="20" viewBox="0 0 21 20"><path d="M1.2 18.6L10.3 1.6L12.3 6.2M16.4 13.7L19.3 18.6H1.2" fill="none" stroke="#e03333" stroke-width="1.7" stroke-linejoin="round"/><path d="M12 12.6L17.8 7.2" stroke="#111" stroke-width="3.5" stroke-linecap="round"/><path d="M10.4 14.4L12.6 12" stroke="#111" stroke-width="2.4" stroke-linecap="round"/></svg>
<div class="t" style="left:82.5px;top:757.26px">12.36 Countertops (Stone, Solid Surface, P-Lam) - Quote 3</div>
<div class="t" style="left:525.5px;top:757.26px">Received</div>
<div class="t" style="left:600px;width:200px;text-align:right;top:757.26px">$571,864.00</div>
<div class="t" style="left:809px;width:86px;text-align:right;top:757.26px">$0.00</div>
<div class="t" style="left:911px;top:757.26px">U.S. Dollar</div>
<div class="a" style="left:1039px;top:755px;width:19px;height:19px;border:1px solid #a2a2a2;border-radius:2px;background:#fff"></div>
<div class="t" style="left:1103px;top:757.26px">None</div>
<div class="a" style="left:1227px;top:755px;width:19px;height:19px;border:1px solid #a2a2a2;border-radius:2px;background:#fff"></div>
<div class="t" style="left:1379.5px;top:757.26px">3/27/2025</div>
<div class="t" style="left:1470px;top:757.26px">Other</div>
<svg style="left:51px;top:785px" width="21" height="20" viewBox="0 0 21 20"><path d="M1.2 18.6L10.3 1.6L12.3 6.2M16.4 13.7L19.3 18.6H1.2" fill="none" stroke="#e03333" stroke-width="1.7" stroke-linejoin="round"/><path d="M12 12.6L17.8 7.2" stroke="#111" stroke-width="3.5" stroke-linecap="round"/><path d="M10.4 14.4L12.6 12" stroke="#111" stroke-width="2.4" stroke-linecap="round"/></svg>
<div class="t" style="left:82.5px;top:785.11px">07.81 Applied Fireproofing - Quote 3</div>
<div class="t" style="left:525.5px;top:785.11px">Received</div>
<div class="t" style="left:600px;width:200px;text-align:right;top:785.11px">$294,650.00</div>
<div class="t" style="left:809px;width:86px;text-align:right;top:785.11px">$0.00</div>
<div class="t" style="left:911px;top:785.11px">U.S. Dollar</div>
<div class="a" style="left:1039px;top:783px;width:19px;height:19px;border:1px solid #a2a2a2;border-radius:2px;background:#fff"></div>
<div class="t" style="left:1103px;top:785.11px">None</div>
<div class="a" style="left:1227px;top:783px;width:19px;height:19px;border:1px solid #a2a2a2;border-radius:2px;background:#fff"></div>
<div class="t" style="left:1379.5px;top:785.11px">3/27/2025</div>
<div class="t" style="left:1470px;top:785.11px">Email</div>
<svg style="left:51px;top:813px" width="21" height="20" viewBox="0 0 21 20"><path d="M1.2 18.6L10.3 1.6L12.3 6.2M16.4 13.7L19.3 18.6H1.2" fill="none" stroke="#e03333" stroke-width="1.7" stroke-linejoin="round"/><path d="M12 12.6L17.8 7.2" stroke="#111" stroke-width="3.5" stroke-linecap="round"/><path d="M10.4 14.4L12.6 12" stroke="#111" stroke-width="2.4" stroke-linecap="round"/></svg>
<div class="t" style="left:82.5px;top:812.97px">08.21 Doors, Frames &amp; Hardware Supply - Quote 3</div>
<div class="t" style="left:525.5px;top:812.97px">Received</div>
<div class="t" style="left:600px;width:200px;text-align:right;top:812.97px">$1,946,636.00</div>
<div class="t" style="left:809px;width:86px;text-align:right;top:812.97px">$0.00</div>
<div class="t" style="left:911px;top:812.97px">U.S. Dollar</div>
<div class="a" style="left:1039px;top:811px;width:19px;height:19px;border:1px solid #a2a2a2;border-radius:2px;background:#fff"></div>
<div class="t" style="left:1103px;top:812.97px">None</div>
<div class="a" style="left:1227px;top:811px;width:19px;height:19px;border:1px solid #a2a2a2;border-radius:2px;background:#fff"></div>
<div class="t" style="left:1379.5px;top:812.97px">3/27/2025</div>
<div class="t" style="left:1470px;top:812.97px">Hard</div>
<svg style="left:51px;top:840px" width="21" height="20" viewBox="0 0 21 20"><path d="M1.2 18.6L10.3 1.6L12.3 6.2M16.4 13.7L19.3 18.6H1.2" fill="none" stroke="#e03333" stroke-width="1.7" stroke-linejoin="round"/><path d="M12 12.6L17.8 7.2" stroke="#111" stroke-width="3.5" stroke-linecap="round"/><path d="M10.4 14.4L12.6 12" stroke="#111" stroke-width="2.4" stroke-linecap="round"/></svg>
<div class="t" style="left:82.5px;top:840.83px">21.00 Fire Protection System - Quote 3</div>
<div class="t" style="left:525.5px;top:840.83px">Incomplete</div>
<div class="t" style="left:600px;width:200px;text-align:right;top:840.83px">$789,000.00</div>
<div class="t" style="left:809px;width:86px;text-align:right;top:840.83px">$0.00</div>
<div class="t" style="left:911px;top:840.83px">U.S. Dollar</div>
<div class="a" style="left:1039px;top:838px;width:19px;height:19px;border:1px solid #a2a2a2;border-radius:2px;background:#fff"></div>
<div class="t" style="left:1103px;top:840.83px">None</div>
<div class="a" style="left:1227px;top:838px;width:19px;height:19px;border:1px solid #a2a2a2;border-radius:2px;background:#fff"></div>
<div class="t" style="left:1379.5px;top:840.83px">3/27/2025</div>
<div class="t" style="left:1470px;top:840.83px">Email</div>
<svg style="left:51px;top:868px" width="21" height="20" viewBox="0 0 21 20"><path d="M1.2 18.6L10.3 1.6L12.3 6.2M16.4 13.7L19.3 18.6H1.2" fill="none" stroke="#e03333" stroke-width="1.7" stroke-linejoin="round"/><path d="M12 12.6L17.8 7.2" stroke="#111" stroke-width="3.5" stroke-linecap="round"/><path d="M10.4 14.4L12.6 12" stroke="#111" stroke-width="2.4" stroke-linecap="round"/></svg>
<div class="t" style="left:82.5px;top:868.69px">23.99 Mechanical, Complete - Quote 1</div>
<div class="t" style="left:525.5px;top:868.69px">Incomplete</div>
<div class="t" style="left:600px;width:200px;text-align:right;top:868.69px">$0.00</div>
<div class="t" style="left:809px;width:86px;text-align:right;top:868.69px">$0.00</div>
<div class="t" style="left:911px;top:868.69px">U.S. Dollar</div>
<div class="a" style="left:1039px;top:866px;width:19px;height:19px;border:1px solid #a2a2a2;border-radius:2px;background:#fff"></div>
<div class="t" style="left:1103px;top:868.69px">None</div>
<div class="a" style="left:1227px;top:866px;width:19px;height:19px;border:1px solid #a2a2a2;border-radius:2px;background:#fff"></div>
<div class="t" style="left:1379.5px;top:868.69px">3/27/2025</div>
<div class="t" style="left:1470px;top:868.69px">Hard</div>
<svg style="left:51px;top:896px" width="21" height="20" viewBox="0 0 21 20"><path d="M1.2 18.6L10.3 1.6L12.3 6.2M16.4 13.7L19.3 18.6H1.2" fill="none" stroke="#e03333" stroke-width="1.7" stroke-linejoin="round"/><path d="M12 12.6L17.8 7.2" stroke="#111" stroke-width="3.5" stroke-linecap="round"/><path d="M10.4 14.4L12.6 12" stroke="#111" stroke-width="2.4" stroke-linecap="round"/></svg>
<div class="t" style="left:82.5px;top:896.54px">04.00 Masonry - Quote 3</div>
<div class="t" style="left:525.5px;top:896.54px">Received</div>
<div class="t" style="left:600px;width:200px;text-align:right;top:896.54px">$695,238.00</div>
<div class="t" style="left:809px;width:86px;text-align:right;top:896.54px">$0.00</div>
<div class="t" style="left:911px;top:896.54px">U.S. Dollar</div>
<div class="a" style="left:1039px;top:894px;width:19px;height:19px;border:1px solid #a2a2a2;border-radius:2px;background:#fff"></div>
<div class="t" style="left:1103px;top:896.54px">None</div>
<div class="a" style="left:1227px;top:894px;width:19px;height:19px;border:1px solid #a2a2a2;border-radius:2px;background:#fff"></div>
<div class="t" style="left:1379.5px;top:896.54px">3/27/2025</div>
<div class="t" style="left:1470px;top:896.54px">Hard</div>
<svg style="left:51px;top:924px" width="21" height="20" viewBox="0 0 21 20"><path d="M1.2 18.6L10.3 1.6L12.3 6.2M16.4 13.7L19.3 18.6H1.2" fill="none" stroke="#e03333" stroke-width="1.7" stroke-linejoin="round"/><path d="M12 12.6L17.8 7.2" stroke="#111" stroke-width="3.5" stroke-linecap="round"/><path d="M10.4 14.4L12.6 12" stroke="#111" stroke-width="2.4" stroke-linecap="round"/></svg>
<div class="t" style="left:82.5px;top:924.4px">32.18 Athletic and Recreational Surfacing - Quote 2</div>
<div class="t" style="left:525.5px;top:924.4px">Received</div>
<div class="t" style="left:600px;width:200px;text-align:right;top:924.4px">$90,334.00</div>
<div class="t" style="left:809px;width:86px;text-align:right;top:924.4px">$0.00</div>
<div class="t" style="left:911px;top:924.4px">U.S. Dollar</div>
<div class="a" style="left:1039px;top:922px;width:19px;height:19px;border:1px solid #a2a2a2;border-radius:2px;background:#fff"></div>
<div class="t" style="left:1103px;top:924.4px">None</div>
<div class="a" style="left:1227px;top:922px;width:19px;height:19px;border:1px solid #a2a2a2;border-radius:2px;background:#fff"></div>
<div class="t" style="left:1379.5px;top:924.4px">3/27/2025</div>
<div class="t" style="left:1470px;top:924.4px">Hard</div>
<svg style="left:985px;top:372px" width="8" height="5" viewBox="0 0 8 5"><path d="M0 0h8l-4 4.5z" fill="#333"/></svg>
</body></html>
